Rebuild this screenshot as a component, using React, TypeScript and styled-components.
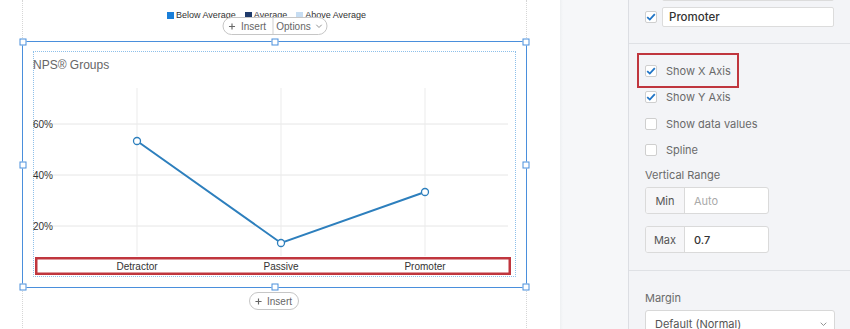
import React from "react";
import styled, { createGlobalStyle } from "styled-components";

const GlobalStyle = createGlobalStyle`
  html, body { margin: 0; padding: 0; background: #fff; }
  body { font-family: "Liberation Sans", Arial, sans-serif; }
  * { box-sizing: border-box; }
`;

const Layout = styled.div`
  display: grid;
  grid-template-columns: 560px 68px 222px;
  height: 329px;
  overflow: hidden;
`;

const Canvas = styled.div`
  background: #fff;
  padding-left: 22px;
  display: flex;
`;

const Page = styled.div`
  width: 505px;
  height: 100%;
  border-left: 1px dotted #d6d6d6;
  border-right: 1px dotted #d6d6d6;
  display: flex;
  flex-direction: column;
  align-items: center;
`;

const LegendArea = styled.div`
  height: 41px;
  width: 100%;
  display: flex;
  justify-content: center;
  padding-top: 10px;
  padding-right: 16px;
`;

const Legend = styled.div`
  display: flex;
  gap: 9px;
  height: 10px;
  font-family: "Liberation Sans", Arial, sans-serif;
  font-size: 9px;
  line-height: 10px;
  color: #333;
`;

const LegendItem = styled.span`
  display: inline-flex;
  align-items: center;
  gap: 2px;
`;

const Swatch = styled.i<{ $c: string }>`
  display: inline-block;
  width: 7px;
  height: 7px;
  background: ${(p) => p.$c};
`;

const Selection = styled.div`
  position: relative;
  align-self: stretch;
  margin: 0 -1px;
  height: 247px;
  border: 1px solid #4a8fdc;
  padding: 9px 10px 10px;
`;

const Handle = styled.span<{ $x: string; $y: string }>`
  position: absolute;
  width: 7px;
  height: 7px;
  background: #fff;
  border: 1px solid #4a8fdc;
  left: ${(p) => p.$x};
  top: ${(p) => p.$y};
  transform: translate(-50%, -50%);
`;

const Pill = styled.div`
  display: inline-flex;
  align-items: stretch;
  height: 18px;
  border: 1px solid #c6c6c6;
  border-radius: 10px;
  background: #fff;
  font-family: "Liberation Sans", Arial, sans-serif;
  font-size: 10px;
  color: #666;
`;

const TopPill = styled(Pill)`
  position: absolute;
  top: -25px;
  left: 50%;
  transform: translateX(-50%);
`;

const PillPart = styled.span<{ $w: number; $divider?: boolean }>`
  display: inline-flex;
  align-items: center;
  justify-content: center;
  gap: 5px;
  width: ${(p) => p.$w}px;
  border-left: ${(p) => (p.$divider ? "1px solid #cfcfcf" : "none")};
`;

const BottomPill = styled(Pill)`
  margin-top: 4px;
  margin-right: 2px;
`;

const Inner = styled.div`
  height: 100%;
  border: 1px dotted #8ec0ea;
  display: flex;
  flex-direction: column;
`;

const ChartTitle = styled.div`
  height: 28px;
  padding-top: 6px;
  font-family: "Liberation Sans", Arial, sans-serif;
  font-size: 12px;
  line-height: 14px;
  color: #666;
  margin-left: -1px;
`;

const ChartSvg = styled.svg`
  display: block;
  overflow: visible;
  font-family: "Liberation Sans", Arial, sans-serif;
`;

const Strip = styled.div`
  background: linear-gradient(to right, #eef0f2 0, #f6f7f9 3px, #f6f7f9 100%);
`;

const Sidebar = styled.div`
  background: #f3f4f7;
  border-left: 1px solid #dcdee3;
  font-family: Inter, "Noto Sans", sans-serif;
  font-size: 11px;
  color: #6a6a6a;
  display: flex;
  flex-direction: column;
`;

const Section = styled.div<{ $pt: number; $pb: number }>`
  padding: ${(p) => p.$pt}px 16px ${(p) => p.$pb}px 16px;
  border-bottom: 1px solid #dfe1e5;
  display: flex;
  flex-direction: column;
`;

const FirstSection = styled(Section)`
  margin-top: -19px;
  gap: 6px;
`;

const LastSection = styled(Section)`
  border-bottom: none;
`;

const TextInput = styled.div`
  height: 20px;
  background: #fff;
  border: 1px solid #dcdcdc;
  border-radius: 2px;
  display: flex;
  align-items: center;
  padding-left: 6px;
  color: #333;
  font-weight: 500;
  font-size: 11.5px;
  flex: 1;
`;

const CheckRow = styled.div<{ $h?: number }>`
  display: flex;
  align-items: center;
  gap: 5px;
  height: ${(p) => p.$h ?? 26.3}px;
`;

const OptionRow = styled(CheckRow)`
  gap: 9px;
`;

const Spacer = styled.span`
  width: 12px;
  flex: none;
`;

const Highlight = styled.span`
  position: relative;
  display: inline-flex;
  align-items: center;
  gap: 9px;
  &::after {
    content: "";
    position: absolute;
    left: -8px;
    right: -8px;
    top: -11px;
    bottom: -10px;
    border: 2.5px solid #c0363e;
  }
`;

const Box = styled.span`
  width: 12px;
  height: 12px;
  flex: none;
  background: #fff;
  border: 1px solid #cfcfcf;
  border-radius: 2px;
  display: inline-flex;
  align-items: center;
  justify-content: center;
`;

const Label = styled.div<{ $h: number }>`
  height: ${(p) => p.$h}px;
  display: flex;
  align-items: center;
`;

const Group = styled.div<{ $mt: number }>`
  margin-top: ${(p) => p.$mt}px;
  width: 124px;
  height: 27px;
  display: flex;
  border: 1px solid #dadada;
  border-radius: 3px;
  background: #fff;
  overflow: hidden;
`;

const GroupLabel = styled.span`
  width: 39px;
  background: #f6f6f8;
  border-right: 1px solid #dadada;
  display: flex;
  align-items: center;
  justify-content: center;
  color: #555;
  font-weight: 400;
`;

const GroupValue = styled.span<{ $placeholder?: boolean }>`
  display: flex;
  align-items: center;
  padding-left: 9px;
  color: ${(p) => (p.$placeholder ? "#a9a9a9" : "#333")};
  font-weight: ${(p) => (p.$placeholder ? 400 : 500)};
`;

const Select = styled.div`
  margin-top: 4px;
  width: 190px;
  height: 28px;
  background: #fff;
  border: 1px solid #d8d8d8;
  border-radius: 3px;
  display: flex;
  align-items: center;
  justify-content: space-between;
  padding: 0 7px 0 9px;
  color: #555;
`;

const Check = () => (
  <svg width="10" height="8" viewBox="0 0 10 8">
    <polyline points="1.2,4.2 3.8,6.6 8.8,1.2" fill="none" stroke="#1f74c6" strokeWidth="1.8" />
  </svg>
);

const CheckBox = ({ checked }: { checked?: boolean }) => <Box>{checked && <Check />}</Box>;

const Chevron = ({ size = 7, color = "#777" }: { size?: number; color?: string }) => (
  <svg width={size} height={size * 0.6} viewBox="0 0 10 6">
    <polyline points="1,1 5,5 9,1" fill="none" stroke={color} strokeWidth="1.3" />
  </svg>
);

const Plus = () => (
  <svg width="7" height="7" viewBox="0 0 8 8">
    <path d="M4 0.5V7.5M0.5 4H7.5" stroke="#666" strokeWidth="1.3" />
  </svg>
);

const points = [
  { x: 103, y: 61, label: "Detractor" },
  { x: 247, y: 163, label: "Passive" },
  { x: 391, y: 112, label: "Promoter" },
];

const Chart = () => (
  <ChartSvg width="480" height="195" viewBox="0 0 480 195">
    {[44, 95, 146].map((y) => (
      <line key={y} x1="18" x2="474" y1={y} y2={y} stroke="#e6e6e6" strokeWidth="1" />
    ))}
    {points.map((p) => (
      <line key={p.x} x1={p.x} x2={p.x} y1="8" y2="176" stroke="#ebebeb" strokeWidth="1" />
    ))}
    {[
      { y: 44, t: "60%" },
      { y: 95, t: "40%" },
      { y: 146, t: "20%" },
    ].map((l) => (
      <text key={l.t} x="-1" y={l.y + 3.5} fontSize="10" fill="#333">
        {l.t}
      </text>
    ))}
    <polyline
      points={points.map((p) => `${p.x},${p.y}`).join(" ")}
      fill="none"
      stroke="#2d7fbd"
      strokeWidth="2"
    />
    {points.map((p) => (
      <circle key={p.label} cx={p.x} cy={p.y} r="3.5" fill="#fff" stroke="#2d7fbd" strokeWidth="1.3" />
    ))}
    {points.map((p) => (
      <text key={p.label + "l"} x={p.x} y="189.5" fontSize="10" fill="#333" textAnchor="middle">
        {p.label}
      </text>
    ))}
    <rect x="2.25" y="178.25" width="473.5" height="15.5" fill="none" stroke="#c0363e" strokeWidth="2.5" />
  </ChartSvg>
);

const handles: [string, string][] = [
  ["0%", "0%"],
  ["50%", "0%"],
  ["100%", "0%"],
  ["0%", "50%"],
  ["100%", "50%"],
  ["0%", "100%"],
  ["50%", "100%"],
  ["100%", "100%"],
];

export default function App() {
  return (
    <>
      <GlobalStyle />
      <Layout>
        <Canvas>
          <Page>
            <LegendArea>
              <Legend>
                <LegendItem>
                  <Swatch $c="#1a7fd9" />
                  Below Average
                </LegendItem>
                <LegendItem>
                  <Swatch $c="#1f3b6b" />
                  Average
                </LegendItem>
                <LegendItem>
                  <Swatch $c="#c7ddf2" />
                  Above Average
                </LegendItem>
              </Legend>
            </LegendArea>
            <Selection>
              {handles.map(([x, y]) => (
                <Handle key={x + y} $x={x} $y={y} />
              ))}
              <TopPill>
                <PillPart $w={49}>
                  <Plus />
                  Insert
                </PillPart>
                <PillPart $w={54} $divider>
                  Options
                  <Chevron size={7} color="#888" />
                </PillPart>
              </TopPill>
              <Inner>
                <ChartTitle>NPS® Groups</ChartTitle>
                <Chart />
              </Inner>
            </Selection>
            <BottomPill>
              <PillPart $w={48}>
                <Plus />
                Insert
              </PillPart>
            </BottomPill>
          </Page>
        </Canvas>
        <Strip />
        <Sidebar>
          <FirstSection $pt={0} $pb={16}>
            <CheckRow $h={20}>
              <Spacer />
              <TextInput />
            </CheckRow>
            <CheckRow $h={20}>
              <CheckBox checked />
              <TextInput>Promoter</TextInput>
            </CheckRow>
          </FirstSection>
          <Section $pt={14} $pb={17}>
            <OptionRow>
              <Highlight>
                <CheckBox checked />
                Show X Axis
              </Highlight>
            </OptionRow>
            <OptionRow>
              <CheckBox checked />
              Show Y Axis
            </OptionRow>
            <OptionRow>
              <CheckBox />
              Show data values
            </OptionRow>
            <OptionRow>
              <CheckBox />
              Spline
            </OptionRow>
            <Label $h={24}>Vertical Range</Label>
            <Group $mt={0}>
              <GroupLabel>Min</GroupLabel>
              <GroupValue $placeholder>Auto</GroupValue>
            </Group>
            <Group $mt={12}>
              <GroupLabel>Max</GroupLabel>
              <GroupValue>0.7</GroupValue>
            </Group>
          </Section>
          <LastSection $pt={19} $pb={0}>
            <Label $h={16}>Margin</Label>
            <Select>
              Default (Normal)
              <Chevron size={7} color="#888" />
            </Select>
          </LastSection>
        </Sidebar>
      </Layout>
    </>
  );
}
